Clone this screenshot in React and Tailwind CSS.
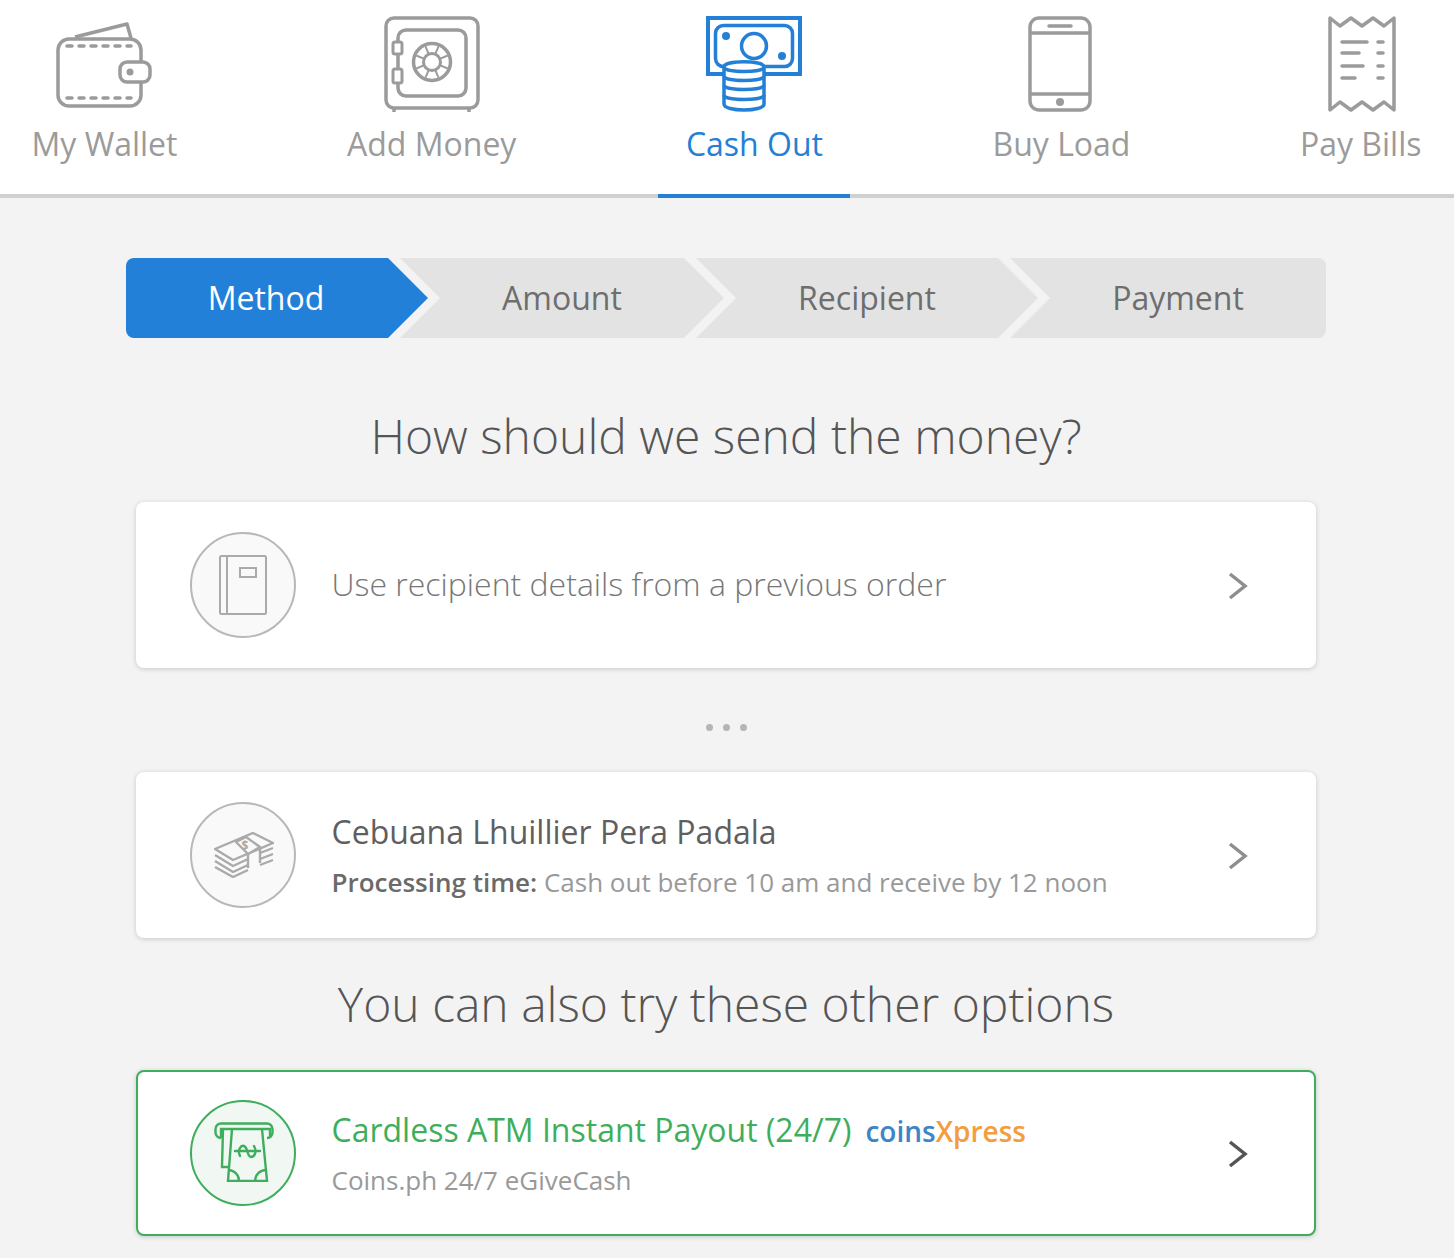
import React from "react";

const GRAY = "#9b9b9b";
const BLUE = "#2380d6";

function WalletIcon() {
  return (
    <svg width="96" height="96" viewBox="0 0 96 96" fill="none" stroke={GRAY} strokeWidth="3.5" strokeLinejoin="round">
      <path d="M19 21 71 8 75 22" />
      <rect x="2" y="23" width="83" height="67" rx="11" />
      <path d="M11 30H75M11 82H75" strokeDasharray="5 7" strokeLinecap="round" />
      <rect x="64" y="46" width="30" height="20" rx="7" fill="#fff" />
      <circle cx="74" cy="56" r="3.5" fill={GRAY} stroke="none" />
    </svg>
  );
}

function SafeIcon() {
  const spokes = [0, 45, 90, 135, 180, 225, 270, 315];
  return (
    <svg width="96" height="96" viewBox="0 0 96 96" fill="none" stroke={GRAY} strokeWidth="3.5">
      <rect x="2" y="2" width="92" height="90" rx="8" />
      <path d="M10 92V96M85 92V96" />
      <rect x="14" y="14" width="68" height="66" rx="8" />
      <rect x="9" y="26" width="9" height="12" rx="2" fill="#fff" strokeWidth="3" />
      <rect x="9" y="53" width="9" height="14" rx="2" fill="#fff" strokeWidth="3" />
      <circle cx="48" cy="46" r="18.5" />
      <circle cx="48" cy="46" r="8.5" strokeWidth="3" />
      {spokes.map((a) => (
        <path key={a} d="M48 37V29" strokeWidth="2" transform={`rotate(${a + 22.5} 48 46)`} />
      ))}
    </svg>
  );
}

function CashIcon() {
  return (
    <svg width="96" height="96" viewBox="0 0 96 96" fill="none" stroke={BLUE} strokeWidth="4">
      <rect x="2" y="2" width="92" height="56" />
      <rect x="9.5" y="9.5" width="77" height="41" rx="8" strokeWidth="3.5" />
      <circle cx="48" cy="30" r="12.5" strokeWidth="3.5" />
      <circle cx="20" cy="20" r="4" fill={BLUE} stroke="none" />
      <circle cx="76" cy="40" r="4" fill={BLUE} stroke="none" />
      <path d="M18 51C18 44 58 44 58 51V88C58 96 18 96 18 88Z" fill="#fff" strokeWidth="3.5" />
      <path d="M18 51C18 57 58 57 58 51M18 60C18 66 58 66 58 60M18 69C18 75 58 75 58 69M18 79C18 85 58 85 58 79" strokeWidth="3.5" />
    </svg>
  );
}

function PhoneIcon() {
  return (
    <svg width="64" height="96" viewBox="0 0 64 96" fill="none" stroke={GRAY} strokeWidth="3.5" className="-translate-x-px">
      <rect x="2" y="2" width="60" height="92" rx="9" />
      <path d="M2 17H62M2 78H62" />
      <path d="M21 10H43" strokeLinecap="round" />
      <circle cx="32" cy="86" r="4" fill={GRAY} stroke="none" />
    </svg>
  );
}

function ReceiptIcon() {
  return (
    <svg width="68" height="96" viewBox="0 0 68 96" fill="none" stroke={GRAY} strokeWidth="3.5" strokeLinejoin="round" className="translate-x-px">
      <path d="M2 2 12 10 23 2 34 10 45 2 56 10 66 2V94L56 86 45 94 34 86 23 94 12 86 2 94Z" />
      <path d="M14 26H39M14 37H31M14 50H35M14 62H27M50 26H55M50 37H55M50 50H55M50 62H55" strokeLinecap="round" />
    </svg>
  );
}

function BookIcon() {
  return (
    <svg width="48" height="60" viewBox="0 0 48 60" fill="none" stroke="#aaa" strokeWidth="2">
      <rect x="1" y="1" width="46" height="58" rx="1.5" />
      <path d="M8 1V59" />
      <rect x="21" y="13" width="16" height="9" />
    </svg>
  );
}

function MoneyIcon() {
  return (
    <svg width="60" height="46" viewBox="0 0 60 46" fill="none" stroke="#aaa" strokeWidth="2.4" strokeLinejoin="round" className="translate-x-px">
      <path d="M1 17 39 1 59 11 19 28Z" />
      <path d="M22 10 32 5 46 15 34 22Z" fill="#f9f9f9" />
      <path d="M34 22V36M46 15V31" />
      <path d="M1 23 19 34 34 27M1 29 19 40 34 33M1 35 19 45 34 38M46 21 59 16M46 27 59 22M46 33 59 28" />
      <text x="31" y="18" fontSize="12" fontWeight="700" fill="#aaa" stroke="none" textAnchor="middle" fontFamily="'Open Sans', sans-serif">$</text>
    </svg>
  );
}

function AtmIcon() {
  return (
    <svg width="60" height="60" viewBox="0 0 60 60" fill="none" stroke="#3fae5c" strokeWidth="2.4" className="translate-x-px -translate-y-px">
      <path d="M7 16A5.5 5.5 0 0 1 1.5 10.5V7A5.5 5.5 0 0 1 7 1.5H53A5.5 5.5 0 0 1 58.5 7V10.5A5.5 5.5 0 0 1 53 16" />
      <path d="M7 16V7H56V16" />
      <path d="M9 7 8 45H14M18 7 14 59H53L48 7" />
      <path d="M15 48A11 11 0 0 1 25 59M52 48A11 11 0 0 0 41 59" />
      <path d="M21 29H46M26 34C23 28 27 23 30 24C34 25 33 35 37 35C41 35 43 29 40 24" strokeLinecap="round" />
    </svg>
  );
}

function Chevron({ color }) {
  return (
    <svg width="20" height="28" viewBox="0 0 20 28" fill="none" stroke={color} strokeWidth="3.5" className="shrink-0 translate-y-px">
      <path d="M2 2 17 14 2 26" />
    </svg>
  );
}

function Tab({ label, active, children }) {
  return (
    <div className={`relative flex h-[198px] flex-col items-center border-b-4 px-[27.5px] pt-[16px] ${active ? "border-[#2380d6] text-[#2380d6]" : "border-transparent text-[#9b9b9b]"}`}>
      <div className="h-[96px]">{children}</div>
      <div className="mt-[10px] whitespace-nowrap text-[32px] leading-[44px]">{label}</div>
    </div>
  );
}

function Card({ green, icon, children }) {
  return (
    <div className={`mx-auto flex h-[166px] w-[1180px] items-center rounded-[8px] bg-white shadow-[0_1px_5px_rgba(0,0,0,0.18)] ${green ? "border-2 border-[#3fae5c] pl-[52px] pr-[66px]" : "pl-[54px] pr-[68px]"}`}>
      <div className={`flex h-[106px] w-[106px] shrink-0 items-center justify-center rounded-full border-2 ${green ? "border-[#3fae5c] bg-[#f1f7f2]" : "border-[#b8b8b8] bg-[#f9f9f9]"}`}>
        {icon}
      </div>
      <div className="ml-[35.5px] min-w-0 flex-1">{children}</div>
      <Chevron color={green ? "#555555" : "#8e8e8e"} />
    </div>
  );
}

export default function App() {
  return (
    <div className="h-[1258px] overflow-hidden bg-[#f3f3f3] font-['Open_Sans',sans-serif]">
      <div className="relative flex justify-between bg-white pl-[4px] pr-[5px]">
        <div className="absolute inset-x-0 bottom-0 h-[4px] bg-[#d0d0d0]" />
        <Tab label="My Wallet"><WalletIcon /></Tab>
        <Tab label="Add Money"><SafeIcon /></Tab>
        <Tab label="Cash Out" active><CashIcon /></Tab>
        <Tab label="Buy Load"><PhoneIcon /></Tab>
        <Tab label="Pay Bills"><ReceiptIcon /></Tab>
      </div>

      <div className="w-[1452px]">
        <div className="ml-[126px] mt-[60px] flex h-[80px] w-[1200px] text-[32px] text-[#6e6e6e]">
          <div className="relative z-10 flex w-[302px] items-center justify-center rounded-l-[8px] pr-[22px] text-white">
            <div className="absolute inset-0 rounded-l-[8px] bg-[#2380d8] [clip-path:polygon(0_0,262px_0,100%_50%,262px_100%,0_100%)]" />
            <span className="relative">Method</span>
          </div>
          <div className="ml-[-28px] flex w-[324px] items-center justify-center bg-[#e3e3e3] [clip-path:polygon(0_0,284px_0,100%_50%,284px_100%,0_100%,40px_50%)]">Amount</div>
          <div className="ml-[-28px] flex w-[342px] items-center justify-center bg-[#e3e3e3] [clip-path:polygon(0_0,302px_0,100%_50%,302px_100%,0_100%,40px_50%)]">Recipient</div>
          <div className="ml-[-28px] flex w-[316px] items-center justify-center rounded-r-[8px] bg-[#e3e3e3] pl-[20px] [clip-path:polygon(0_0,100%_0,100%_100%,0_100%,40px_50%)]">Payment</div>
        </div>

        <h2 className="mt-[63px] h-[70px] text-center text-[48px] font-light leading-[70px] text-[#555]">How should we send the money?</h2>

        <div className="mt-[31px]">
          <Card icon={<BookIcon />}>
            <div className="pb-[2px] text-[32px] font-light text-[#777]">Use recipient details from a previous order</div>
          </Card>
        </div>

        <div className="flex h-[104px] items-center justify-center gap-[10px] pt-[14px]">
          <span className="h-[7px] w-[7px] rounded-full bg-[#b5b5b5]" />
          <span className="h-[7px] w-[7px] rounded-full bg-[#b5b5b5]" />
          <span className="h-[7px] w-[7px] rounded-full bg-[#b5b5b5]" />
        </div>

        <Card icon={<MoneyIcon />}>
          <div className="text-[32px] leading-[44px] text-[#5f5f5f]">Cebuana Lhuillier Pera Padala</div>
          <div className="mt-[9px] text-[26px] leading-[38px] text-[#999]">
            <span className="font-semibold text-[#6a6a6a]">Processing time:</span> Cash out before 10 am and receive by 12 noon
          </div>
        </Card>

        <h2 className="mt-[31px] h-[70px] text-center text-[48px] font-light leading-[70px] text-[#555]">You can also try these other options</h2>

        <div className="mt-[31px]">
          <Card green icon={<AtmIcon />}>
            <div className="flex items-baseline text-[32px] leading-[44px] text-[#3fae5c]">
              Cardless ATM Instant Payout (24/7)
              <span className="ml-[14px] text-[28px] font-semibold text-[#3d85c6]">coins<span className="text-[#f39c40]">Xpress</span></span>
            </div>
            <div className="mt-[8px] text-[26px] leading-[38px] text-[#999]">Coins.ph 24/7 eGiveCash</div>
          </Card>
        </div>
      </div>
    </div>
  );
}
